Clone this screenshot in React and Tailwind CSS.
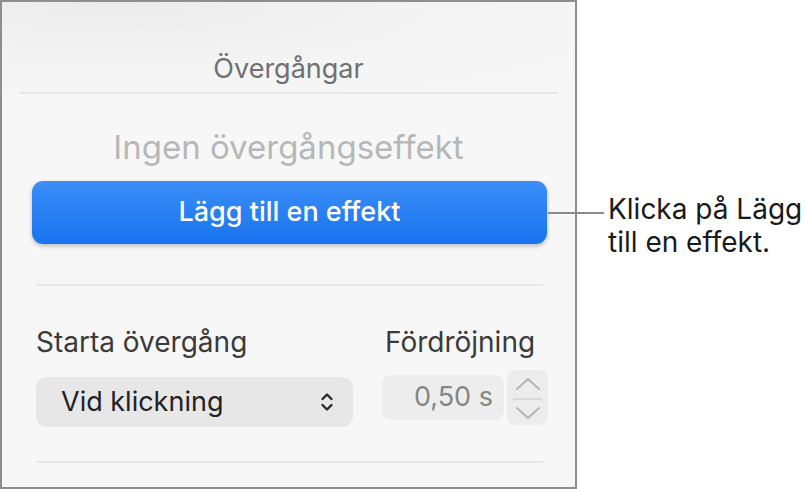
const font = { fontFamily: 'Inter, "Noto Sans", sans-serif' };

const Divider = ({ className }) => <div className={`h-[2px] bg-[#e7e7e7] ${className}`} />;

const UpDown = () => (
  <svg width="16" height="22" viewBox="0 0 16 22" fill="none" stroke="#2b2b2b" strokeWidth="2.4" strokeLinecap="round" strokeLinejoin="round">
    <path d="M3.5 8 L8 3.5 L12.5 8" />
    <path d="M3.5 14 L8 18.5 L12.5 14" />
  </svg>
);

// thin up/down arrows with a rule between them
const Stepper = () => (
  <div className="w-[41px] h-[55px] rounded-[9px] bg-[#ececec] flex flex-col items-center pt-[7px]">
    <svg width="26" height="14" viewBox="0 0 26 14" fill="none" stroke="#b4b4b4" strokeWidth="2" strokeLinecap="round" strokeLinejoin="round">
      <path d="M2 12 L13 2 L24 12" />
    </svg>
    <div className="mt-[7px] w-[29px] h-[2px] bg-[#d8d8d8]" />
    <svg className="mt-[6px]" width="26" height="14" viewBox="0 0 26 14" fill="none" stroke="#b4b4b4" strokeWidth="2" strokeLinecap="round" strokeLinejoin="round">
      <path d="M2 2 L13 12 L24 2" />
    </svg>
  </div>
);

export default function App() {
  return (
    <div className="w-[806px] h-[489px] bg-white flex relative" style={font}>
      <div className="w-[577px] h-[489px] border-2 border-[#8e8e8e] bg-[#f7f7f7] flex flex-col">
        <div className="h-[90px] flex items-end justify-center pb-[6px] bg-[radial-gradient(ellipse_at_20%_0%,#ececec,#f4f4f4_55%,#f7f7f7)]">
          <span className="text-[27px] leading-[34px] text-[#707070]">Övergångar</span>
        </div>
        <Divider className="mx-[17px]" />

        <div className="mt-[33px] text-center text-[33px] leading-[40px] text-[#b7b7b7]">
          Ingen övergångseffekt
        </div>

        <button className="mt-[14px] ml-[30px] mr-[28px] h-[63px] rounded-[11px] bg-gradient-to-b from-[#3b8ef8] to-[#1773ee] shadow-[0_2px_4px_rgba(0,0,0,0.25)] text-white text-[27px] font-medium">
          Lägg till en effekt
        </button>

        <Divider className="mt-[40px] ml-[35px] mr-[32px]" />

        <div className="mt-[38px] ml-[34px] mr-[27px] flex justify-between">
          <div className="flex flex-col">
            <span className="text-[28px] leading-[36px] text-[#3a3a3a]">Starta övergång</span>
            <div className="mt-[17px] w-[317px] h-[50px] rounded-[11px] bg-[#e7e7e7] flex items-center justify-between pl-[25px] pr-[18px]">
              <span className="text-[27px] text-[#222222]">Vid klickning</span>
              <UpDown />
            </div>
          </div>
          <div className="flex flex-col">
            <span className="pl-[3px] text-[28px] leading-[36px] text-[#3a3a3a]">Fördröjning</span>
            <div className="mt-[10px] flex items-center gap-[3px]">
              <div className="w-[122px] h-[45px] rounded-[9px] bg-[#ededed] flex items-center justify-end pr-[11px]">
                <span className="text-[27px] text-[#858585]">0,50 s</span>
              </div>
              <Stepper />
            </div>
          </div>
        </div>

        <Divider className="mt-[34px] ml-[35px] mr-[32px]" />
      </div>

      {/* callout leader */}
      <div className="absolute left-[548px] top-[212px] w-[56px] h-[2px] bg-[#8a8a8a]" />

      <div className="ml-[31px] mt-[193px] text-[28px] leading-[33px] text-[#1a1a1a]">
        <div>Klicka på Lägg</div>
        <div>till en effekt.</div>
      </div>
    </div>
  );
}
